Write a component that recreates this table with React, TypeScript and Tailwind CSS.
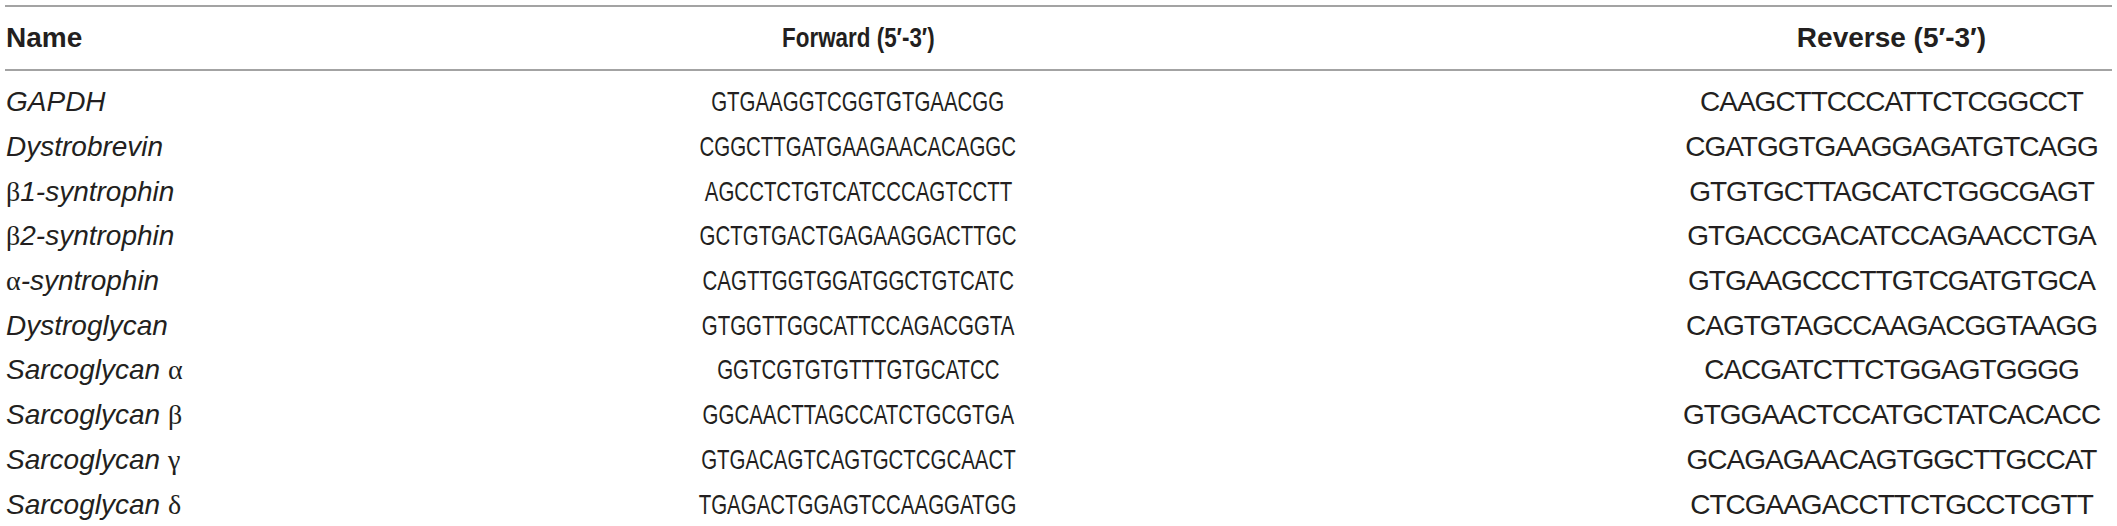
const rows = [
  { name: <i>GAPDH</i>, fwd: 'GTGAAGGTCGGTGTGAACGG', rev: 'CAAGCTTCCCATTCTCGGCCT' },
  { name: <i>Dystrobrevin</i>, fwd: 'CGGCTTGATGAAGAACACAGGC', rev: 'CGATGGTGAAGGAGATGTCAGG' },
  { name: <><Greek>β</Greek><i>1-syntrophin</i></>, fwd: 'AGCCTCTGTCATCCCAGTCCTT', rev: 'GTGTGCTTAGCATCTGGCGAGT' },
  { name: <><Greek>β</Greek><i>2-syntrophin</i></>, fwd: 'GCTGTGACTGAGAAGGACTTGC', rev: 'GTGACCGACATCCAGAACCTGA' },
  { name: <><Greek>α</Greek><i>-syntrophin</i></>, fwd: 'CAGTTGGTGGATGGCTGTCATC', rev: 'GTGAAGCCCTTGTCGATGTGCA' },
  { name: <i>Dystroglycan</i>, fwd: 'GTGGTTGGCATTCCAGACGGTA', rev: 'CAGTGTAGCCAAGACGGTAAGG' },
  { name: <><i>Sarcoglycan</i> <Greek>α</Greek></>, fwd: 'GGTCGTGTGTTTGTGCATCC', rev: 'CACGATCTTCTGGAGTGGGG' },
  { name: <><i>Sarcoglycan</i> <Greek>β</Greek></>, fwd: 'GGCAACTTAGCCATCTGCGTGA', rev: 'GTGGAACTCCATGCTATCACACC' },
  { name: <><i>Sarcoglycan</i> <Greek>γ</Greek></>, fwd: 'GTGACAGTCAGTGCTCGCAACT', rev: 'GCAGAGAACAGTGGCTTGCCAT' },
  { name: <><i>Sarcoglycan</i> <Greek>δ</Greek></>, fwd: 'TGAGACTGGAGTCCAAGGATGG', rev: 'CTCGAAGACCTTCTGCCTCGTT' },
];

function Greek({ children }: { children: React.ReactNode }) {
  return <span className="font-['Liberation_Serif',serif] not-italic">{children}</span>;
}

export default function App() {
  return (
    <div className="w-[2117px] h-[526px] bg-white pl-[5px] pr-[5px] pt-[5px] font-['Liberation_Sans',Arial,sans-serif] text-[28px] leading-none text-[#231f20]">
      <div className="border-t-2 border-b-2 border-[#a3a3a3] grid grid-cols-[300px_1106px_1fr] h-[66px] items-center font-bold">
        <div className="pl-[1px]">Name</div>
        <div className="text-center">
          <span className="inline-block scale-x-[0.8]">Forward (5′-3′)</span>
        </div>
        <div className="pl-[260px] text-center">Reverse (5′-3′)</div>
      </div>
      <div className="pt-[9px]">
        {rows.map((row, i) => (
          <div key={i} className="grid grid-cols-[300px_1106px_1fr] h-[44.7px] items-center">
            <div className="pl-[1px]">{row.name}</div>
            <div className="text-center">
              <span className="inline-block scale-x-[0.73]">{row.fwd}</span>
            </div>
            <div className="pl-[260px] text-center tracking-[-1px]">{row.rev}</div>
          </div>
        ))}
      </div>
    </div>
  );
}
